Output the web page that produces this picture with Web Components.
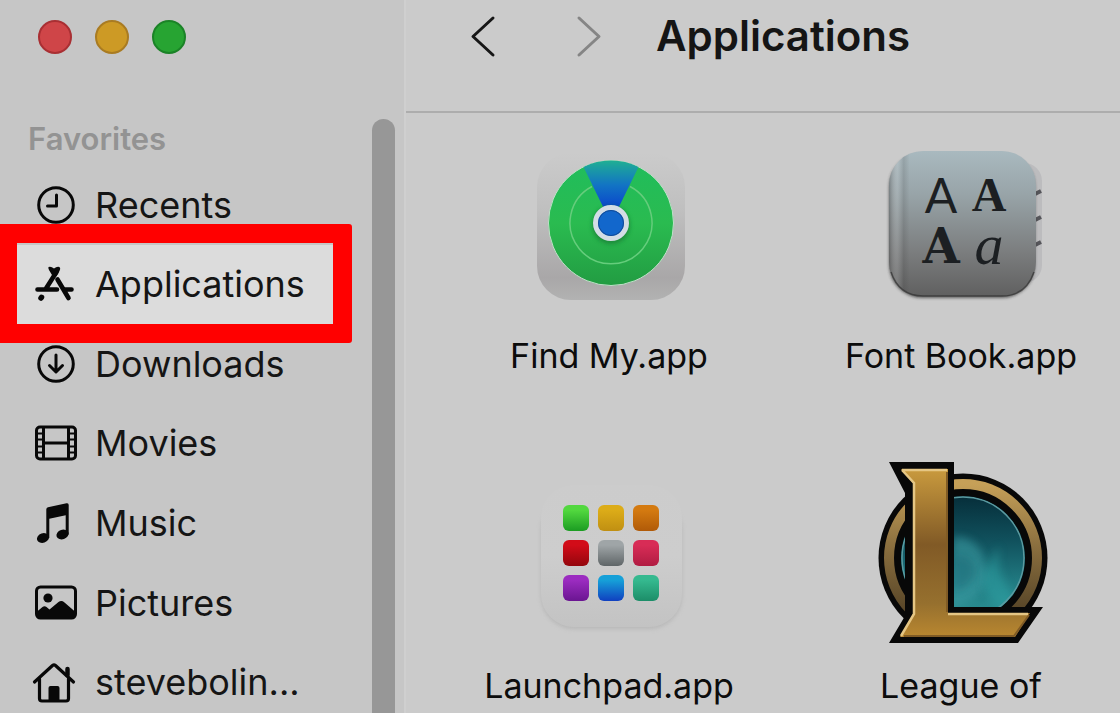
<!DOCTYPE html>
<html lang="en">
<head>
<meta charset="utf-8">
<title>Applications</title>
<style>
  html, body { margin: 0; height: 100%; }
  body { overflow: hidden; background: #cbcbcb; color: #151515; font-family: Inter, Roboto, sans-serif; }
</style>
</head>
<body>
<finder-window>
  <side-bar slot="sidebar" heading="Favorites">
    <side-item icon="clock">Recents</side-item>
    <side-item icon="apps" selected>Applications</side-item>
    <side-item icon="download">Downloads</side-item>
    <side-item icon="film">Movies</side-item>
    <side-item icon="music">Music</side-item>
    <side-item icon="picture">Pictures</side-item>
    <side-item icon="home">stevebolin...</side-item>
  </side-bar>
  <tool-bar slot="toolbar">Applications</tool-bar>
  <app-tile icon="findmy">Find My.app</app-tile>
  <app-tile icon="fontbook">Font Book.app</app-tile>
  <app-tile icon="launchpad">Launchpad.app</app-tile>
  <app-tile icon="league">League of</app-tile>
</finder-window>

<script>
const GLYPHS = {
  clock: `<g fill="none" stroke="currentColor" stroke-width="3" stroke-linecap="round" stroke-linejoin="round">
    <circle cx="22" cy="22" r="17.3"/><path d="M22.5 12V23H13.5"/></g>`,
  apps: `<g fill="none" stroke="currentColor" stroke-width="4.6" stroke-linecap="round">
    <path d="M22.500 10L12 26.500M3.500 27.500H23M23.500 17.500L34.500 36M31 27.500H37.500"/><path d="M7.500 35.300l-.5.700" stroke-width="5.500"/></g>
    <path d="M14.500 5Q17 4 20 6.500Q23 4 25.500 5Q27 6.500 25.500 9L22.500 14 18 13 15 8Q14 6 14.500 5z" fill="currentColor"/>`,
  download: `<g fill="none" stroke="currentColor" stroke-width="3" stroke-linecap="round" stroke-linejoin="round">
    <circle cx="22" cy="22" r="17.3"/><path d="M22 13V29M15.500 23.500L22 30l6.500-6.500"/></g>`,
  film: `<g fill="none" stroke="currentColor" stroke-width="3">
    <rect x="2.500" y="6" width="39" height="32" rx="3.500"/><path d="M9.500 6V38M34.500 6V38M9.500 22H34.500"/>
    <path d="M3 12.500h6M3 18.500h6M3 25.500h6M3 31.500h6M35 12.500h6M35 18.500h6M35 25.500h6M35 31.500h6" stroke-width="2"/></g>`,
  music: `<g fill="currentColor"><ellipse cx="9" cy="37" rx="6.200" ry="4.800" transform="rotate(-18 9 37)"/>
    <ellipse cx="28.500" cy="33.500" rx="6.200" ry="4.800" transform="rotate(-18 28.500 33.500)"/>
    <path d="M12.300 37V8.500Q12.300 6.700 14 6.300L32.500 2.300Q34.700 1.900 34.700 4V33.500H31.700V14.200L15.300 17.700V37z"/></g>`,
  picture: `<rect x="2.500" y="6" width="39" height="31" rx="4" fill="none" stroke="currentColor" stroke-width="3"/>
    <circle cx="14" cy="17" r="4.600" fill="currentColor"/>
    <path d="M2.500 31L8.500 26Q10.500 24.500 12.500 26L15.500 28.500 24.500 21Q27.500 18.800 30.500 21.500L41.500 31V35Q41 38 38 38H6Q2.500 38 2.500 34z" fill="currentColor"/>`,
  home: `<g fill="none" stroke="currentColor" stroke-width="3.200" stroke-linecap="round" stroke-linejoin="round">
    <path d="M.5 22L18.500 5.500Q20 4.300 21.500 5.500L39.500 22M5.500 19V38.500Q5.500 41 8 41H32Q34.500 41 34.500 38.500V19"/><path d="M33.500 9V15" stroke-width="4.500"/></g>
    <path d="M14.500 41V28Q14.500 26 16.500 26H23.500Q25.500 26 25.500 28V41z" fill="currentColor"/>`
};

const keys = [
  [54, 50, '#52d83f', '#1b9c22'], [89, 50, '#dcac18', '#c08f12'], [124, 50, '#d47a10', '#b05a08'],
  [54, 85, '#d20c18', '#93060d'], [89, 85, '#9fa5a7', '#5f6567'], [124, 85, '#d82c56', '#b01c42'],
  [54, 120, '#9b2cc0', '#6a1591'], [89, 120, '#16a0d8', '#1040c0'], [124, 120, '#35b98f', '#1c8d68']
].map(([x, y, a, b], i) => `<linearGradient id="k${i}" x2="0" y2="1"><stop offset=".2" stop-color="${a}"/><stop offset="1" stop-color="${b}"/></linearGradient>
  <rect x="${x}" y="${y}" width="26" height="26" rx="6" fill="url(#k${i})"/>`).join('');

const APPS = {
  findmy: `<defs>
      <linearGradient id="b" x2="0" y2="1"><stop stop-color="#cbcbcb"/><stop offset=".4" stop-color="#bfbfbf"/><stop offset=".85" stop-color="#a9a7a8"/><stop offset="1" stop-color="#b2b2b2"/></linearGradient>
      <linearGradient id="g" x2="0" y2="1"><stop stop-color="#20bd5c"/><stop offset=".5" stop-color="#2abb50"/><stop offset="1" stop-color="#229c42"/></linearGradient>
      <linearGradient id="w" gradientUnits="userSpaceOnUse" x1="0" y1="36" x2="0" y2="84"><stop stop-color="#1fae94"/><stop offset=".5" stop-color="#1274c4"/><stop offset="1" stop-color="#0a43cc"/></linearGradient>
      <filter id="s" x="-20%" y="-20%" width="140%" height="140%"><feGaussianBlur stdDeviation="2"/></filter></defs>
    <rect x="28" y="28" width="148" height="147" rx="34" fill="url(#b)"/>
    <circle cx="102" cy="98" r="62.500" fill="url(#g)" stroke="#bfe0c8" stroke-width="1"/>
    <path d="M102 98L74.500 42A62 62 0 0 1 129.500 42z" fill="url(#w)"/>
    <path d="M83 61.500A41 41 0 1 0 121 61.500" fill="none" stroke="#65cd7c" stroke-width="1.500"/>
    <circle cx="102" cy="100" r="19" fill="#12702f" opacity=".6" filter="url(#s)"/>
    <circle cx="102" cy="98" r="15.500" fill="#1267cc" stroke="#d3dde5" stroke-width="5"/>
    <circle cx="102" cy="98" r="12.500" fill="none" stroke="#134b96" stroke-width="1"/>`,
  fontbook: `<defs>
      <linearGradient id="b" x2="0" y2="1"><stop stop-color="#a9b9bf"/><stop offset=".3" stop-color="#98a4a8"/><stop offset=".7" stop-color="#7b7d7e"/><stop offset="1" stop-color="#606060"/></linearGradient>
      <linearGradient id="l"><stop stop-color="#444" stop-opacity=".4"/><stop offset=".06" stop-color="#fff" stop-opacity=".12"/><stop offset=".1" stop-color="#333" stop-opacity=".15"/><stop offset=".14" stop-color="#333" stop-opacity="0"/></linearGradient>
      <filter id="s" x="-20%" y="-20%" width="140%" height="140%"><feGaussianBlur stdDeviation="1.500"/></filter></defs>
    <rect x="110" y="38" width="71" height="120" rx="18" fill="#bcbcbe"/>
    <path d="M172 70l8-4M172 96l8-4M172 121l8-4" stroke="#55555a" stroke-width="4"/>
    <rect x="28" y="29" width="146" height="144" rx="33" fill="#333" opacity=".7" filter="url(#s)"/>
    <rect x="28" y="26" width="147" height="145" rx="34" fill="url(#b)"/>
    <rect x="28" y="26" width="147" height="145" rx="34" fill="url(#l)"/>
    <path d="M30 147Q38 171 62 171H141Q165 171 173 147" fill="none" stroke="#303030" stroke-width="1.500" opacity=".7"/>
    <g fill="#1c1f22" text-anchor="middle">
      <text x="80" y="88" font-family="Lato, sans-serif" font-size="48">A</text>
      <text x="128" y="86" font-family="Liberation Serif, serif" font-weight="700" font-size="48">A</text>
      <text x="80" y="138" font-family="DejaVu Serif, serif" font-weight="700" font-size="48">A</text>
      <text x="128" y="139" font-family="Liberation Serif, serif" font-style="italic" font-size="58">a</text>
    </g>`,
  launchpad: `<defs><linearGradient id="b" x2="0" y2="1"><stop stop-color="#cccccc"/><stop offset=".5" stop-color="#cdcdcd"/><stop offset="1" stop-color="#c3c3c3"/></linearGradient>
      <filter id="s" x="-20%" y="-20%" width="140%" height="140%"><feGaussianBlur stdDeviation="2"/></filter></defs>
    <rect x="32" y="42" width="141" height="132" rx="33" fill="#aaa" opacity=".6" filter="url(#s)"/>
    <rect x="32" y="30" width="141" height="142" rx="33" fill="url(#b)"/>${keys}`,
  league: `<defs>
      <linearGradient id="r" x2="0" y2="1"><stop stop-color="#c6a058"/><stop offset=".4" stop-color="#8d7140"/><stop offset="1" stop-color="#473820"/></linearGradient>
      <linearGradient id="g" x2="0" y2="1"><stop stop-color="#c99a3e"/><stop offset=".45" stop-color="#815a26"/><stop offset=".8" stop-color="#96702e"/><stop offset="1" stop-color="#b98730"/></linearGradient>
      <linearGradient id="t" x2="0" y2="1"><stop stop-color="#062e3a"/><stop offset=".35" stop-color="#10505c"/><stop offset=".7" stop-color="#217b82"/><stop offset="1" stop-color="#2d9496"/></linearGradient>
      <filter id="s" x="-20%" y="-20%" width="140%" height="140%"><feGaussianBlur stdDeviation="4"/></filter>
      <clipPath id="c"><circle cx="102" cy="103" r="62"/></clipPath></defs>
    <circle cx="102" cy="103" r="84.500" fill="#080808"/>
    <circle cx="102" cy="103" r="74" fill="none" stroke="url(#r)" stroke-width="10"/>
    <circle cx="102" cy="103" r="62" fill="url(#t)"/>
    <g clip-path="url(#c)">
      <path d="M92 82Q122 80 126 118Q126 142 88 156z" fill="#3b9aa1" opacity=".6" filter="url(#s)"/>
      <path d="M138 90Q132 120 160 148L150 160Q120 146 122 120z" fill="#2fa3a5" opacity=".5" filter="url(#s)"/>
      <path d="M92 102Q112 98 114 118Q110 132 92 136z" fill="#17616f" opacity=".4" filter="url(#s)"/>
      <circle cx="102" cy="103" r="61" fill="none" stroke="#5b9aa0" stroke-width="1.500"/></g>
    <path d="M28 7H93V152H182L157 188H28L44 161V38z" fill="#080808"/>
    <path d="M44 38V161L52 158V30z" fill="#080808"/>
    <path d="M40 14H87V158H169L154 182H39L52 159V28z" fill="url(#g)"/>
    <path d="M41 15H86M41 15L53 28V159L40 181M87 159H167" fill="none" stroke="#e5c684" stroke-width="2.500"/>
    <path d="M86 17V157M168 160L153 181H43" fill="none" stroke="#805b25" stroke-width="2"/>`
};

class FinderWindow extends HTMLElement {
  constructor() {
    super();
    this.attachShadow({ mode: 'open' }).innerHTML = `<style>
      :host { display: grid; grid-template-columns: 406px minmax(0, 1fr); height: 100vh; overflow: hidden; }
      main { min-width: 0; overflow: hidden; background: #cbcbcb; }
      .apps { display: grid; grid-template-columns: repeat(2, 352px); row-gap: 79px; padding: 12px 0 0 27px; }
    </style>
    <slot name="sidebar"></slot>
    <main><slot name="toolbar"></slot><div class="apps"><slot></slot></div></main>`;
  }
}

class SideBar extends HTMLElement {
  constructor() {
    super();
    this.attachShadow({ mode: 'open' }).innerHTML = `<style>
      :host { display: block; position: relative; box-sizing: border-box; min-height: 0; background: #c6c6c6; border-right: 2px solid #cfcfcf; }
      .lights { display: flex; gap: 23px; padding: 20px 0 0 38px; }
      .lights button { box-sizing: border-box; width: 34px; height: 34px; padding: 0; border: 2px solid var(--rim); border-radius: 50%; background: var(--fill); }
      .close { --fill: #cf4548; --rim: #a92f33; }
      .min { --fill: #cd9a25; --rim: #a97b22; }
      .zoom { --fill: #27a432; --rim: #1b8327; }
      h2 { margin: 65px 0 0 28px; font-size: 31px; line-height: 40px; font-weight: 600; color: #939393; }
      nav { display: grid; grid-auto-rows: 1fr; height: 557px; margin-top: 6px; }
      .bar { position: absolute; top: 119px; right: 9px; bottom: 0; width: 23px; border-radius: 12px 12px 0 0; background: #979797; }
    </style>
    <div class="lights"><button class="close" aria-label="Close"></button><button class="min" aria-label="Minimize"></button><button class="zoom" aria-label="Zoom"></button></div>
    <h2></h2><nav><slot></slot></nav><div class="bar"></div>`;
    this.shadowRoot.querySelector('h2').textContent = this.getAttribute('heading');
  }
}

class SideItem extends HTMLElement {
  constructor() {
    super();
    this.attachShadow({ mode: 'open' }).innerHTML = `<style>
      :host { display: block; position: relative; }
      a { display: flex; align-items: center; gap: 17px; height: 100%; padding-left: 34px; color: inherit; text-decoration: none; font-size: 36px; line-height: 44px; }
      svg { width: 44px; height: 44px; flex: none; overflow: visible; color: #080808; }
      :host([selected]) { z-index: 1; }
      :host([selected]) a { width: 299px; background: #dcdcdc; }
      :host([selected])::after { content: ""; position: absolute; top: -21px; left: -2px; width: 316px; height: 81px; border: 19px solid #ff0000; border-radius: 3px; }
    </style><a href="#"><svg viewBox="0 0 44 44" aria-hidden="true">${GLYPHS[this.getAttribute('icon')]}</svg><span><slot></slot></span></a>`;
  }
}

class ToolBar extends HTMLElement {
  constructor() {
    super();
    this.attachShadow({ mode: 'open' }).innerHTML = `<style>
      :host { display: flex; align-items: center; box-sizing: border-box; height: 113px; padding: 0 0 39px 54px; border-bottom: 2px solid #adadad; }
      button { display: block; width: 48px; height: 48px; padding: 0; border: 0; background: none; color: #161616; }
      button + button { margin-left: 56px; color: #858585; }
      svg { display: block; width: 48px; height: 48px; }
      h1 { margin: 0 0 0 44px; font-size: 42px; line-height: 48px; font-weight: 600; }
    </style>
    <button aria-label="Back"><svg viewBox="0 0 48 48"><path d="M33 6L13 24.500L33 43" fill="none" stroke="currentColor" stroke-width="3" stroke-linecap="round" stroke-linejoin="round"/></svg></button>
    <button aria-label="Forward" disabled><svg viewBox="0 0 48 48"><path d="M15 6L35 24.500L15 43" fill="none" stroke="currentColor" stroke-width="3" stroke-linecap="round" stroke-linejoin="round"/></svg></button>
    <h1><slot></slot></h1>`;
  }
}

class AppTile extends HTMLElement {
  constructor() {
    super();
    this.attachShadow({ mode: 'open' }).innerHTML = `<style>
      :host { display: block; }
      figure { display: flex; flex-direction: column; align-items: center; gap: 11px; margin: 0; }
      svg { display: block; width: 200px; height: 200px; }
      figcaption { font-size: 34px; line-height: 40px; color: #0c0c0c; white-space: nowrap; }
    </style><figure><svg viewBox="0 0 200 200" aria-hidden="true">${APPS[this.getAttribute('icon')]}</svg><figcaption><slot></slot></figcaption></figure>`;
  }
}

customElements.define('side-item', SideItem);
customElements.define('side-bar', SideBar);
customElements.define('tool-bar', ToolBar);
customElements.define('app-tile', AppTile);
customElements.define('finder-window', FinderWindow);
</script>
</body>
</html>
